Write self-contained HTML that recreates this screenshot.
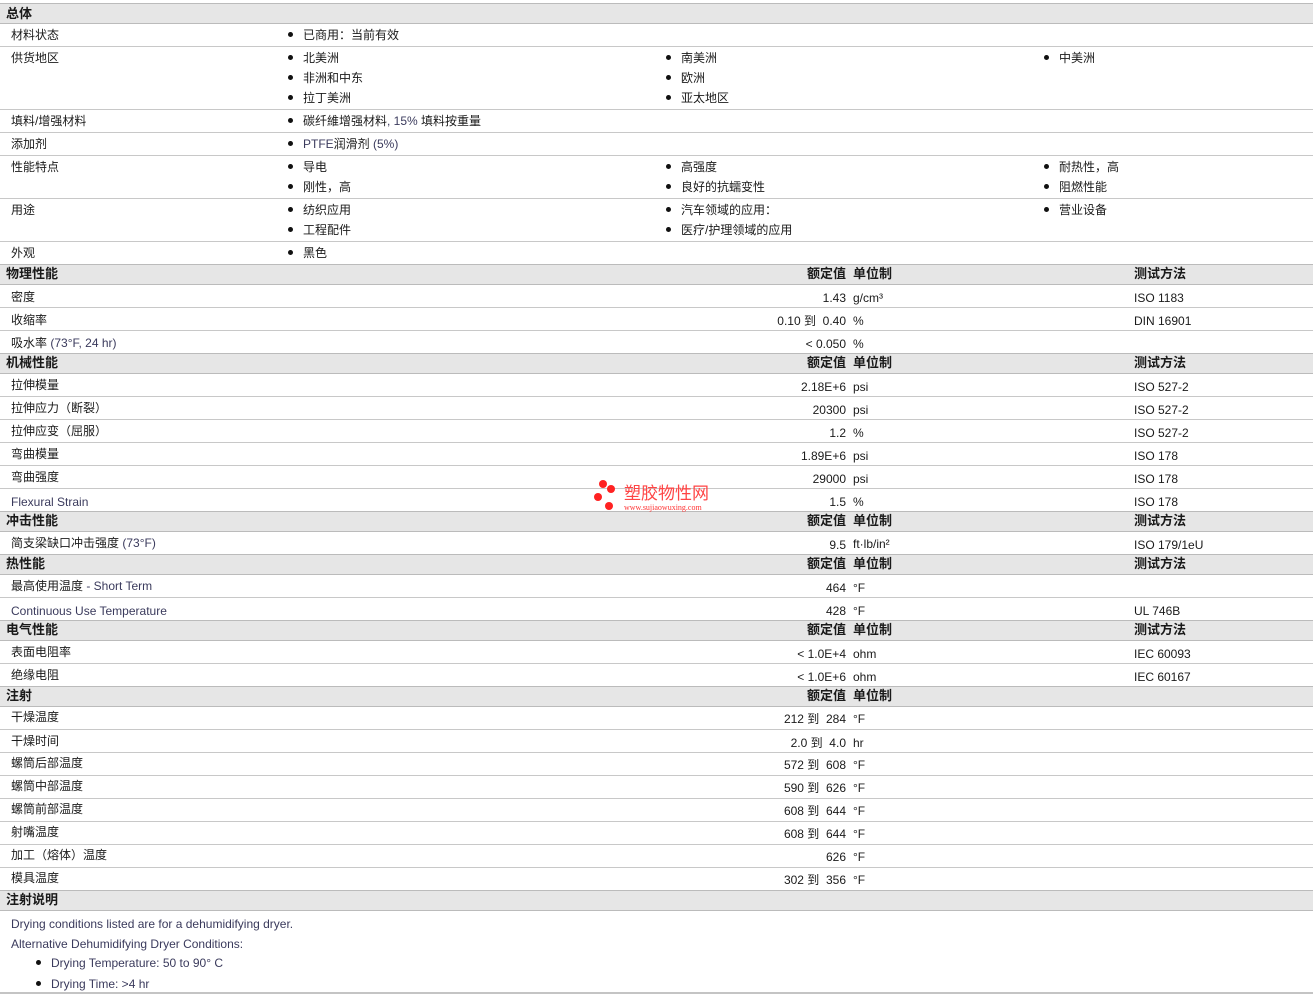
<!DOCTYPE html>
<html><head><meta charset="utf-8"><style>
*{margin:0;padding:0;box-sizing:border-box}
body{width:1313px;height:994px;background:#fff;position:relative;overflow:hidden;font-family:"Liberation Sans","Noto Sans CJK SC",sans-serif;font-size:12px;color:#1a1a1a}
.h{position:absolute;left:0;width:1313px;height:21px;background:#e6e6e6;border-top:1px solid #bbb;border-bottom:1px solid #bbb}
.l{position:absolute;left:0;width:1313px;height:1px;background:#c8c8c8}
.t{position:absolute;line-height:16px;white-space:nowrap;margin-top:1px}
.b{font-weight:bold;font-size:13px}
.r{position:absolute;line-height:16px;white-space:nowrap;right:467px;text-align:right;margin-top:1px}
.e{color:#3a3a5c}
.d{position:absolute;width:5px;height:5px;border-radius:50%;background:#111}
</style></head><body>
<div class="h" style="top:3px"></div><div class="t b" style="left:6px;top:5px">总体</div>
<div class="t" style="left:11px;top:26px">材料状态</div><div class="d" style="left:288px;top:32px"></div><div class="t" style="left:303px;top:26px">已商用：当前有效</div>
<div class="l" style="top:46px"></div>
<div class="t" style="left:11px;top:49px">供货地区</div>
<div class="d" style="left:288px;top:55px"></div><div class="t" style="left:303px;top:49px">北美洲</div>
<div class="d" style="left:288px;top:75px"></div><div class="t" style="left:303px;top:69px">非洲和中东</div>
<div class="d" style="left:288px;top:95px"></div><div class="t" style="left:303px;top:89px">拉丁美洲</div>
<div class="d" style="left:666px;top:55px"></div><div class="t" style="left:681px;top:49px">南美洲</div>
<div class="d" style="left:666px;top:75px"></div><div class="t" style="left:681px;top:69px">欧洲</div>
<div class="d" style="left:666px;top:95px"></div><div class="t" style="left:681px;top:89px">亚太地区</div>
<div class="d" style="left:1044px;top:55px"></div><div class="t" style="left:1059px;top:49px">中美洲</div>
<div class="l" style="top:109px"></div>
<div class="t" style="left:11px;top:112px">填料/增强材料</div><div class="d" style="left:288px;top:118px"></div><div class="t" style="left:303px;top:112px">碳纤維增强材料<span class="e">, 15%</span> 填料按重量</div>
<div class="l" style="top:132px"></div>
<div class="t" style="left:11px;top:135px">添加剂</div><div class="d" style="left:288px;top:141px"></div><div class="t" style="left:303px;top:135px"><span class="e">PTFE</span>润滑剂 <span class="e">(5%)</span></div>
<div class="l" style="top:155px"></div>
<div class="t" style="left:11px;top:158px">性能特点</div>
<div class="d" style="left:288px;top:164px"></div><div class="t" style="left:303px;top:158px">导电</div>
<div class="d" style="left:288px;top:184px"></div><div class="t" style="left:303px;top:178px">刚性，高</div>
<div class="d" style="left:666px;top:164px"></div><div class="t" style="left:681px;top:158px">高强度</div>
<div class="d" style="left:666px;top:184px"></div><div class="t" style="left:681px;top:178px">良好的抗蠕变性</div>
<div class="d" style="left:1044px;top:164px"></div><div class="t" style="left:1059px;top:158px">耐热性，高</div>
<div class="d" style="left:1044px;top:184px"></div><div class="t" style="left:1059px;top:178px">阻燃性能</div>
<div class="l" style="top:198px"></div>
<div class="t" style="left:11px;top:201px">用途</div>
<div class="d" style="left:288px;top:207px"></div><div class="t" style="left:303px;top:201px">纺织应用</div>
<div class="d" style="left:288px;top:227px"></div><div class="t" style="left:303px;top:221px">工程配件</div>
<div class="d" style="left:666px;top:207px"></div><div class="t" style="left:681px;top:201px">汽车领域的应用：</div>
<div class="d" style="left:666px;top:227px"></div><div class="t" style="left:681px;top:221px">医疗/护理领域的应用</div>
<div class="d" style="left:1044px;top:207px"></div><div class="t" style="left:1059px;top:201px">营业设备</div>
<div class="l" style="top:241px"></div>
<div class="t" style="left:11px;top:244px">外观</div><div class="d" style="left:288px;top:250px"></div><div class="t" style="left:303px;top:244px">黑色</div>

<div class="h" style="top:264px"></div><div class="t b" style="left:6px;top:265px">物理性能</div><div class="r b" style="top:265px">额定值</div><div class="t b" style="left:853px;top:265px">单位制</div><div class="t b" style="left:1134px;top:265px">测试方法</div>
<div class="t" style="left:11px;top:288px">密度</div><div class="r" style="top:289px">1.43</div><div class="t" style="left:853px;top:289px">g/cm³</div><div class="t" style="left:1134px;top:289px">ISO 1183</div>
<div class="l" style="top:307px"></div>
<div class="t" style="left:11px;top:311px">收缩率</div><div class="r" style="top:312px">0.10 到&nbsp; 0.40</div><div class="t" style="left:853px;top:312px">%</div><div class="t" style="left:1134px;top:312px">DIN 16901</div>
<div class="l" style="top:330px"></div>
<div class="t" style="left:11px;top:334px">吸水率 <span class="e">(73°F, 24 hr)</span></div><div class="r" style="top:335px">&lt; 0.050</div><div class="t" style="left:853px;top:335px">%</div>

<div class="h" style="top:353px"></div><div class="t b" style="left:6px;top:354px">机械性能</div><div class="r b" style="top:354px">额定值</div><div class="t b" style="left:853px;top:354px">单位制</div><div class="t b" style="left:1134px;top:354px">测试方法</div>
<div class="t" style="left:11px;top:376px">拉伸模量</div><div class="r" style="top:378px">2.18E+6</div><div class="t" style="left:853px;top:378px">psi</div><div class="t" style="left:1134px;top:378px">ISO 527-2</div>
<div class="l" style="top:396px"></div>
<div class="t" style="left:11px;top:399px">拉伸应力（断裂）</div><div class="r" style="top:401px">20300</div><div class="t" style="left:853px;top:401px">psi</div><div class="t" style="left:1134px;top:401px">ISO 527-2</div>
<div class="l" style="top:419px"></div>
<div class="t" style="left:11px;top:422px">拉伸应变（屈服）</div><div class="r" style="top:424px">1.2</div><div class="t" style="left:853px;top:424px">%</div><div class="t" style="left:1134px;top:424px">ISO 527-2</div>
<div class="l" style="top:442px"></div>
<div class="t" style="left:11px;top:445px">弯曲模量</div><div class="r" style="top:447px">1.89E+6</div><div class="t" style="left:853px;top:447px">psi</div><div class="t" style="left:1134px;top:447px">ISO 178</div>
<div class="l" style="top:465px"></div>
<div class="t" style="left:11px;top:468px">弯曲强度</div><div class="r" style="top:470px">29000</div><div class="t" style="left:853px;top:470px">psi</div><div class="t" style="left:1134px;top:470px">ISO 178</div>
<div class="l" style="top:488px"></div>
<div class="t e" style="left:11px;top:493px">Flexural Strain</div><div class="r" style="top:493px">1.5</div><div class="t" style="left:853px;top:493px">%</div><div class="t" style="left:1134px;top:493px">ISO 178</div>

<div class="h" style="top:511px"></div><div class="t b" style="left:6px;top:512px">冲击性能</div><div class="r b" style="top:512px">额定值</div><div class="t b" style="left:853px;top:512px">单位制</div><div class="t b" style="left:1134px;top:512px">测试方法</div>
<div class="t" style="left:11px;top:534px">简支梁缺口冲击强度 <span class="e">(73°F)</span></div><div class="r" style="top:536px">9.5</div><div class="t" style="left:853px;top:535px">ft·lb/in²</div><div class="t" style="left:1134px;top:536px">ISO 179/1eU</div>

<div class="h" style="top:554px"></div><div class="t b" style="left:6px;top:555px">热性能</div><div class="r b" style="top:555px">额定值</div><div class="t b" style="left:853px;top:555px">单位制</div><div class="t b" style="left:1134px;top:555px">测试方法</div>
<div class="t" style="left:11px;top:577px">最高使用温度 <span class="e">- Short Term</span></div><div class="r" style="top:579px">464</div><div class="t" style="left:853px;top:579px">°F</div>
<div class="l" style="top:597px"></div>
<div class="t e" style="left:11px;top:602px">Continuous Use Temperature</div><div class="r" style="top:602px">428</div><div class="t" style="left:853px;top:602px">°F</div><div class="t" style="left:1134px;top:602px">UL 746B</div>

<div class="h" style="top:620px"></div><div class="t b" style="left:6px;top:621px">电气性能</div><div class="r b" style="top:621px">额定值</div><div class="t b" style="left:853px;top:621px">单位制</div><div class="t b" style="left:1134px;top:621px">测试方法</div>
<div class="t" style="left:11px;top:643px">表面电阻率</div><div class="r" style="top:645px">&lt; 1.0E+4</div><div class="t" style="left:853px;top:645px">ohm</div><div class="t" style="left:1134px;top:645px">IEC 60093</div>
<div class="l" style="top:663px"></div>
<div class="t" style="left:11px;top:666px">绝缘电阻</div><div class="r" style="top:668px">&lt; 1.0E+6</div><div class="t" style="left:853px;top:668px">ohm</div><div class="t" style="left:1134px;top:668px">IEC 60167</div>

<div class="h" style="top:686px"></div><div class="t b" style="left:6px;top:687px">注射</div><div class="r b" style="top:687px">额定值</div><div class="t b" style="left:853px;top:687px">单位制</div>
<div class="t" style="left:11px;top:708px">干燥温度</div><div class="r" style="top:710px">212 到&nbsp; 284</div><div class="t" style="left:853px;top:710px">°F</div>
<div class="l" style="top:729px"></div>
<div class="t" style="left:11px;top:732px">干燥时间</div><div class="r" style="top:734px">2.0 到&nbsp; 4.0</div><div class="t" style="left:853px;top:734px">hr</div>
<div class="l" style="top:752px"></div>
<div class="t" style="left:11px;top:754px">螺筒后部温度</div><div class="r" style="top:756px">572 到&nbsp; 608</div><div class="t" style="left:853px;top:756px">°F</div>
<div class="l" style="top:775px"></div>
<div class="t" style="left:11px;top:777px">螺筒中部温度</div><div class="r" style="top:779px">590 到&nbsp; 626</div><div class="t" style="left:853px;top:779px">°F</div>
<div class="l" style="top:798px"></div>
<div class="t" style="left:11px;top:800px">螺筒前部温度</div><div class="r" style="top:802px">608 到&nbsp; 644</div><div class="t" style="left:853px;top:802px">°F</div>
<div class="l" style="top:821px"></div>
<div class="t" style="left:11px;top:823px">射嘴温度</div><div class="r" style="top:825px">608 到&nbsp; 644</div><div class="t" style="left:853px;top:825px">°F</div>
<div class="l" style="top:844px"></div>
<div class="t" style="left:11px;top:846px">加工（熔体）温度</div><div class="r" style="top:848px">626</div><div class="t" style="left:853px;top:848px">°F</div>
<div class="l" style="top:867px"></div>
<div class="t" style="left:11px;top:869px">模具温度</div><div class="r" style="top:871px">302 到&nbsp; 356</div><div class="t" style="left:853px;top:871px">°F</div>

<div class="h" style="top:890px"></div><div class="t b" style="left:6px;top:891px">注射说明</div>
<div class="t e" style="left:11px;top:915px">Drying conditions listed are for a dehumidifying dryer.</div>
<div class="t e" style="left:11px;top:935px">Alternative Dehumidifying Dryer Conditions:</div>
<div class="d" style="left:36px;top:960px"></div><div class="t e" style="left:51px;top:954px">Drying Temperature: 50 to 90° C</div>
<div class="d" style="left:36px;top:981px"></div><div class="t e" style="left:51px;top:975px">Drying Time: &gt;4 hr</div>
<div class="l" style="top:992px;height:2px;background:#c4c4c4"></div>

<div class="d" style="left:599px;top:480px;width:8px;height:8px;background:#f22"></div>
<div class="d" style="left:607px;top:485px;width:8px;height:8px;background:#f22"></div>
<div class="d" style="left:594px;top:493px;width:8px;height:8px;background:#f22"></div>
<div class="d" style="left:605px;top:502px;width:8px;height:8px;background:#f22"></div>
<div class="t" style="left:624px;top:484px;font-size:17px;line-height:18px;color:#f44">塑胶物性网</div>
<div class="t" style="left:624px;top:502px;font-size:8px;line-height:9px;color:#f33;font-family:'Liberation Serif',serif">www.sujiaowuxing.com</div>
</body></html>
